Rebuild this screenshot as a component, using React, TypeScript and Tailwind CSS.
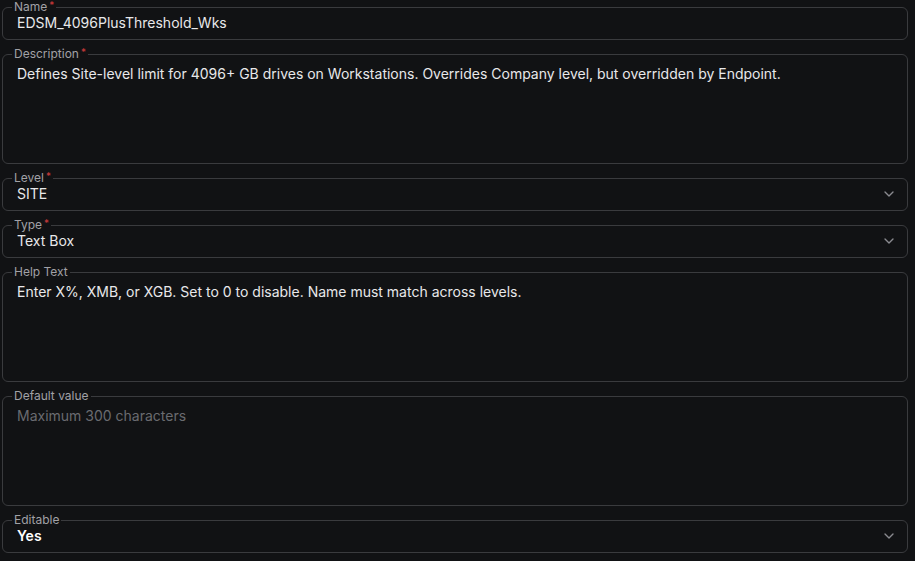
import { ChevronDown } from "lucide-react";
import type { ReactNode } from "react";

const fontStack = { fontFamily: "Inter, 'Noto Sans', 'Liberation Sans', sans-serif" };

function Field({ label, required, children }: { label: string; required?: boolean; children: ReactNode }) {
  return (
    <fieldset className="rounded-md border border-[#3a3b3e] px-[9px] min-w-0">
      <legend className="px-[2px] text-xs leading-[14px] text-[#a1a1a6]">
        {label}
        {required && <span className="relative top-[-2px] ml-[2px] text-[10px] text-[#d23b3b]">*</span>}
      </legend>
      {children}
    </fieldset>
  );
}

function TextInput({ value }: { value: string }) {
  return (
    <div className="pl-[5px] pb-[7px]">
      <input
        readOnly
        value={value}
        className="block w-full h-[18px] bg-transparent text-sm leading-[18px] text-[#e8e8ea] outline-none"
      />
    </div>
  );
}

function TextArea({ value, placeholder }: { value?: string; placeholder?: string }) {
  return (
    <textarea
      readOnly
      value={value ?? ""}
      placeholder={placeholder}
      className="block w-full h-[102px] resize-none bg-transparent pl-[5px] pt-[4px] text-sm leading-[18px] text-[#e8e8ea] placeholder:text-[#6a6b70] outline-none"
    />
  );
}

function SelectBox({ value, bold }: { value: string; bold?: boolean }) {
  return (
    <div className="flex items-center justify-between pl-[5px] pr-[1px] pb-[7px]">
      <span className={bold ? "text-sm leading-[18px] font-semibold text-white" : "text-sm leading-[18px] text-[#e8e8ea]"}>
        {value}
      </span>
      <ChevronDown className="h-4 w-4 text-[#8a8b90]" strokeWidth={2} />
    </div>
  );
}

export default function App() {
  return (
    <div className="min-h-screen bg-[#111214] pl-[2px] pr-[7px]" style={fontStack}>
      <div className="flex flex-col gap-[7px]">
        <Field label="Name" required>
          <TextInput value="EDSM_4096PlusThreshold_Wks" />
        </Field>

        <Field label="Description" required>
          <TextArea value="Defines Site-level limit for 4096+ GB drives on Workstations. Overrides Company level, but overridden by Endpoint." />
        </Field>

        <Field label="Level" required>
          <SelectBox value="SITE" />
        </Field>

        <Field label="Type" required>
          <SelectBox value="Text Box" />
        </Field>

        <Field label="Help Text">
          <TextArea value="Enter X%, XMB, or XGB. Set to 0 to disable. Name must match across levels." />
        </Field>

        <Field label="Default value">
          <TextArea placeholder="Maximum 300 characters" />
        </Field>

        <Field label="Editable">
          <SelectBox value="Yes" bold />
        </Field>
      </div>
    </div>
  );
}
